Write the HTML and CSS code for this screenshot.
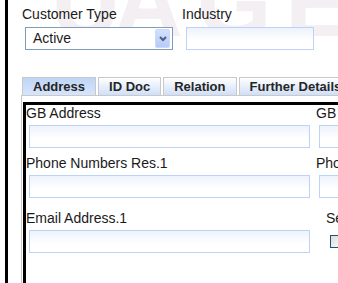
FILE: index.html
```html
<!DOCTYPE html>
<html lang="en">
<head>
  <meta charset="UTF-8">
  <meta name="viewport" content="width=device-width, initial-scale=1.0">
  <title>Customer – Details</title>
  <link rel="stylesheet" href="styles.css">
</head>
<body>
  <div class="page">
    <div class="watermark"><span class="wm-lead">U</span>AGE</div>

    <div class="top-fields">
      <div class="field field-type">
        <label>Customer Type</label>
        <div class="select">
          <span>Active</span>
          <span class="select-arrow">
            <svg width="8" height="6" viewBox="0 0 8 6"><path d="M1 1 L4 4 L7 1" fill="none" stroke="#4a5f86" stroke-width="2"/></svg>
          </span>
        </div>
      </div>
      <div class="field field-industry">
        <label>Industry</label>
        <div class="text-input industry-input"></div>
      </div>
    </div>

    <div class="tabs">
      <div class="tab-strip">
        <span class="tab active">Address</span>
        <span class="tab">ID Doc</span>
        <span class="tab">Relation</span>
        <span class="tab">Further Details</span>
      </div>
      <div class="tab-panel">
        <div class="form-box">
          <div class="form-row">
            <div class="cell cell-left">
              <label>GB Address</label>
              <div class="text-input wide"></div>
            </div>
            <div class="cell">
              <label>GB Address 2</label>
              <div class="text-input wide"></div>
            </div>
          </div>
          <div class="form-row">
            <div class="cell cell-left">
              <label>Phone Numbers Res.1</label>
              <div class="text-input wide"></div>
            </div>
            <div class="cell">
              <label>Phone Numbers Res.2</label>
              <div class="text-input wide"></div>
            </div>
          </div>
          <div class="form-row row-email">
            <div class="cell cell-left">
              <label>Email Address.1</label>
              <div class="text-input wide"></div>
            </div>
            <div class="cell cell-check">
              <label>Send Mail</label>
              <span class="checkbox"></span>
            </div>
          </div>
        </div>
      </div>
    </div>
  </div>
</body>
</html>
```

FILE: styles.css
```css
body {
  margin: 0;
  font-family: "Liberation Sans", Arial, sans-serif;
  background: #fff;
  color: #1a1a1a;
  overflow: hidden;
}
.page {
  position: relative;
  margin-left: 5px;
  border-left: 3px solid #000;
  min-height: 283px;
  padding-left: 14px;
  overflow: hidden;
}
/* faint watermark behind the header fields */
.watermark {
  position: absolute;
  left: 43px;
  top: -45px;
  font-size: 96px;
  line-height: 96px;
  font-weight: bold;
  letter-spacing: 14px;
  color: #f4eff2;
  white-space: nowrap;
}
.wm-lead {
  letter-spacing: -7px;
}
label {
  display: block;
  font-size: 14px;
  line-height: 16px;
  white-space: nowrap;
}
.top-fields {
  position: relative;
  display: flex;
  padding-top: 6px;
}
.field-type {
  width: 160px;
}
.select {
  display: flex;
  align-items: center;
  justify-content: space-between;
  box-sizing: border-box;
  width: 148px;
  height: 23px;
  margin: 5px 0 0 3px;
  padding-left: 7px;
  border: 1px solid #7f9db9;
  background: #fff;
  font-size: 14px;
  line-height: 19px;
}
.select-arrow {
  display: flex;
  align-items: center;
  justify-content: center;
  box-sizing: border-box;
  width: 15px;
  height: 19px;
  margin-right: 2px;
  border: 1px solid #c9d8fb;
  border-radius: 2px;
  background: linear-gradient(#d3e0fd, #b6cbf9);
}
.text-input {
  box-sizing: border-box;
  height: 23px;
  margin: 4px 0 0 3px;
  border: 1px solid #bcd3f5;
  background: linear-gradient(#edf2fc, #fff 60%);
}
.industry-input {
  width: 128px;
  margin: 5px 0 0 4px;
}
.tabs {
  position: relative;
  margin: 27px 0 0 -1px;
}
.tab-strip {
  display: flex;
  gap: 2px;
  padding-left: 1px;
}
.tab {
  box-sizing: border-box;
  height: 18px;
  padding: 0 10px;
  border: 1px solid #c9c9c9;
  border-bottom: 0;
  font-size: 13px;
  line-height: 17px;
  font-weight: bold;
  color: #262626;
  white-space: nowrap;
  background: linear-gradient(#ffffff, #cfdff8);
}
.tab.active {
  background: linear-gradient(#bfd5f6, #d6e5fb);
}
.tab-panel {
  border-top: 1px solid #c9c9c9;
  border-left: 1px solid #c9c9c9;
  padding: 6px 0 0 1px;
}
.form-box {
  width: 600px;
  min-height: 200px;
  border: 3px solid #000;
}
.form-row {
  display: flex;
}
.form-row + .form-row {
  margin-top: 7px;
}
.form-row.row-email {
  margin-top: 12px;
}
.cell-left {
  width: 290px;
}
.wide {
  width: 281px;
}
.cell-check {
  padding-left: 10px;
}
.checkbox {
  display: block;
  box-sizing: border-box;
  width: 13px;
  height: 13px;
  margin: 9px 0 0 4px;
  border: 1px solid #1c5180;
  background: linear-gradient(135deg, #dcdcd7, #fbfbf9);
}
```
